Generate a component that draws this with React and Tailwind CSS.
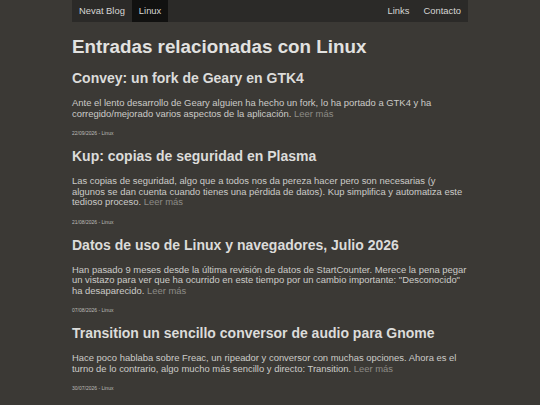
import React from "react";

const posts = [
  {
    title: "Convey: un fork de Geary en GTK4",
    text: "Ante el lento desarrollo de Geary alguien ha hecho un fork, lo ha portado a GTK4 y ha corregido/mejorado varios aspectos de la aplicación.",
    date: "22/09/2026",
  },
  {
    title: "Kup: copias de seguridad en Plasma",
    text: "Las copias de seguridad, algo que a todos nos da pereza hacer pero son necesarias (y algunos se dan cuenta cuando tienes una pérdida de datos). Kup simplifica y automatiza este tedioso proceso.",
    date: "21/08/2026",
  },
  {
    title: "Datos de uso de Linux y navegadores, Julio 2026",
    text: "Han pasado 9 meses desde la última revisión de datos de StartCounter. Merece la pena pegar un vistazo para ver que ha ocurrido en este tiempo por un cambio importante: \"Desconocido\" ha desaparecido.",
    date: "07/08/2026",
  },
  {
    title: "Transition un sencillo conversor de audio para Gnome",
    text: "Hace poco hablaba sobre Freac, un ripeador y conversor con muchas opciones. Ahora es el turno de lo contrario, algo mucho más sencillo y directo: Transition.",
    date: "30/07/2026",
  },
  {
    title: "Freac: un conversor sencillo y ripeador de CD",
    text: "Freac es un ripeador y conversor de audio con muchas opciones para extraer tus discos.",
    date: "12/07/2026",
  },
];

function Post({ post }) {
  return (
    <article>
      <h2 className="text-[14px] font-bold leading-[16px] text-[#dcdcda] mt-[12px]">{post.title}</h2>
      <p className="text-[9.43px] leading-[10.5px] text-[#cbcbc8] mt-[12px]">
        {post.text}{" "}
        <a href="#" className="text-[#8c8b86]">Leer más</a>
      </p>
      <div className="text-[5px] leading-[6px] text-[#bdbcb8] mt-[11px]">{post.date} - Linux</div>
    </article>
  );
}

export default function App() {
  return (
    <div className="min-h-screen bg-[#3b3935] font-['Liberation_Sans',Arial,sans-serif]">
      <div className="max-w-[396px] mx-auto">
        <nav className="flex justify-between bg-[#2b2a28] h-[22px] text-[9.4px] text-[#d6d6d4]">
          <div className="flex">
            <a href="#" className="px-[7px] flex items-center">Nevat Blog</a>
            <a href="#" className="px-[7px] flex items-center bg-[#111110]">Linux</a>
          </div>
          <div className="flex">
            <a href="#" className="px-[7px] flex items-center">Links</a>
            <a href="#" className="px-[7px] flex items-center">Contacto</a>
          </div>
        </nav>
        <main>
          <h1 className="text-[18.8px] font-bold leading-[22px] text-[#e2e2e0] mt-[14px]">Entradas relacionadas con Linux</h1>
          {posts.map((p) => (
            <Post key={p.title} post={p} />
          ))}
        </main>
      </div>
    </div>
  );
}
